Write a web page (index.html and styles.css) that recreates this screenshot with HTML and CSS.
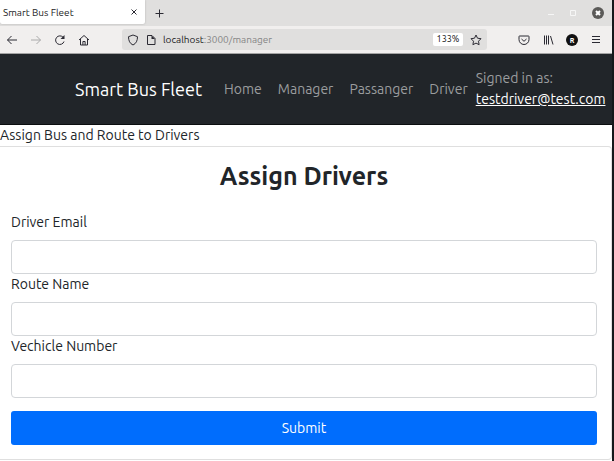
FILE: index.html
```html
<!DOCTYPE html>
<html lang="en">
<head>
<meta charset="utf-8">
<title>Smart Bus Fleet</title>
<link rel="stylesheet" href="styles.css">
</head>
<body>
<div class="window">
  <div class="tabstrip">
    <div class="tab">
      <span class="tab-title">Smart Bus Fleet</span>
      <button class="icon-button" aria-label="Close tab"><svg width="6" height="6" viewBox="0 0 6 6"><path d="M.5 .5l5 5M5.500 .5l-5 5"/></svg></button>
    </div>
    <button class="icon-button new-tab" aria-label="New tab"><svg width="9" height="9" viewBox="0 0 9 9"><path d="M4.500 .5v8M.5 4.500h8"/></svg></button>
    <div class="window-controls">
      <button class="icon-button faint" aria-label="Minimize"><svg width="6" height="6" viewBox="0 0 6 6"><path d="M0 4.500h6"/></svg></button>
      <button class="icon-button faint" aria-label="Maximize"><svg width="6" height="6" viewBox="0 0 6 6"><path d="M.5 .5h5v5h-5z"/></svg></button>
      <button class="icon-button" aria-label="Close window"><svg width="12" height="12" viewBox="0 0 12 12"><circle class="close-disc" cx="6" cy="6" r="6"/><path class="close-cross" d="M4 4l4 4M8 4l-4 4"/></svg></button>
    </div>
  </div>
  <div class="toolbar">
    <div class="history">
      <button class="icon-button" aria-label="Back"><svg width="12" height="12" viewBox="0 0 12 12"><path d="M11 6H1.500M5.500 2l-4 4 4 4"/></svg></button>
      <button class="icon-button disabled" aria-label="Forward"><svg width="12" height="12" viewBox="0 0 12 12"><path d="M1 6h9.500M6.500 2l4 4-4 4"/></svg></button>
      <button class="icon-button" aria-label="Reload"><svg width="12" height="12" viewBox="0 0 12 12"><path d="M10 7.500A4.300 4.300 0 1 1 9.200 3.400"/><path class="solid" d="M10.500 1v4h-4z"/></svg></button>
      <button class="icon-button" aria-label="Home"><svg width="12" height="12" viewBox="0 0 12 12"><path d="M1 6l5-4.500L11 6M2.500 5v6h7V5M4.900 11V7.500h2.200V11"/></svg></button>
    </div>
    <div class="address">
      <svg width="12" height="12" viewBox="0 0 12 12"><path d="M6 1l4.500 1.700c0 4-1.300 6.800-4.500 8.300C2.800 9.500 1.500 6.700 1.500 2.700z"/></svg>
      <svg width="10" height="12" viewBox="0 0 10 12"><path d="M1.500 1.500h4.500l3 3v6h-7.500z"/><path class="solid" d="M5.500 1.500v3.500h3.500z"/></svg>
      <span class="url"><b>localhost</b>:3000/manager</span>
      <button class="zoom-level">133%</button>
      <button class="icon-button" aria-label="Bookmark"><svg width="12" height="12" viewBox="0 0 12 12"><path d="M6 1l1.500 3.200 3.500.5-2.500 2.500.6 3.500L6 9.100l-3.100 1.600.6-3.500L1 4.700l3.500-.5z"/></svg></button>
    </div>
    <div class="tools">
      <button class="icon-button" aria-label="Pocket"><svg width="12" height="12" viewBox="0 0 12 12"><path d="M1.500 2h9q.5 0 .5.500v3a5 5 0 0 1-10 0v-3q0-.5.500-.5zM3.500 5l2.500 2.300L8.500 5"/></svg></button>
      <button class="icon-button" aria-label="Library"><svg width="12" height="12" viewBox="0 0 12 12"><path d="M2.500 1.500v9M4.500 1.500v9M6.500 1.500v9M8.500 2l2.500 8.500"/></svg></button>
      <button class="icon-button account" aria-label="Account">R</button>
      <button class="icon-button" aria-label="Menu"><svg width="12" height="12" viewBox="0 0 12 12"><path d="M2 2.500h8M2 5.500h8M2 8.500h8"/></svg></button>
    </div>
  </div>
  <nav class="navbar">
    <a class="brand" href="#">Smart Bus Fleet</a>
    <div class="nav-links">
      <a href="#">Home</a>
      <a href="#">Manager</a>
      <a href="#">Passanger</a>
      <a href="#">Driver</a>
    </div>
    <p class="signed-in">Signed in as: <a href="#">testdriver@test.com</a></p>
  </nav>
  <main>
    <p class="page-heading">Assign Bus and Route to Drivers</p>
    <section class="card">
      <h2>Assign Drivers</h2>
      <form>
        <label for="email">Driver Email</label>
        <input id="email" type="email">
        <label for="route">Route Name</label>
        <input id="route" type="text">
        <label for="vehicle">Vechicle Number</label>
        <input id="vehicle" type="text">
        <button class="submit" type="submit">Submit</button>
      </form>
    </section>
  </main>
</div>
</body>
</html>
```
FILE: styles.css
```css
* { box-sizing: border-box; }

body {
  margin: 0;
  background: #fff;
  color: #212529;
  font: 14px/21px Ubuntu, "Noto Sans", sans-serif;
}

.window {
  min-height: 100vh;
  border-right: 2px solid #15191b;
}

svg {
  display: block;
  flex: none;
  fill: none;
  stroke: #2b2a33;
  stroke-width: 1;
}

.solid { fill: #2b2a33; stroke: none; }

button, input { font: inherit; }

.icon-button {
  display: flex;
  align-items: center;
  justify-content: center;
  flex: none;
  padding: 0;
  border: 0;
  background: none;
}

.tabstrip {
  display: flex;
  align-items: center;
  height: 26px;
  background: #e0dfde;
}

.tab {
  display: flex;
  align-items: center;
  justify-content: space-between;
  width: 145px;
  height: 24px;
  margin-bottom: 2px;
  padding: 0 8px 0 3px;
  border-radius: 0 0 2px 2px;
  background: #fff;
  box-shadow: 0 0 2px #aaa;
  color: #222;
  font-size: 10px;
}

.new-tab { margin-left: 10px; }

.window-controls {
  display: flex;
  align-items: center;
  gap: 16px;
  margin-left: auto;
  padding-right: 8px;
}

.faint svg { stroke: #f6f6f6; }
.window-controls .close-disc { fill: #5b5a58; stroke: none; }
.window-controls .close-cross { stroke: #fff; stroke-width: 2; }

.toolbar {
  display: flex;
  align-items: center;
  height: 28px;
  border-bottom: 1px solid #a3a3a3;
  background: #f1efee;
}

.history, .tools {
  display: flex;
  gap: 12px;
  padding-left: 6px;
}

.tools { padding: 0 10px 0 31px; }
.disabled svg { stroke: #aaa; }

.address {
  display: flex;
  flex: 1;
  align-items: center;
  gap: 7px;
  height: 21px;
  margin-left: 32px;
  padding: 0 5px;
  border-radius: 3px;
  background: #e0dfde;
}

.url {
  flex: 1;
  color: #858585;
  font-size: 10px;
}

.url b { color: #222; font-weight: 400; }

.zoom-level {
  width: 30px;
  height: 13px;
  padding: 0;
  border: 0;
  border-radius: 2px;
  background: #fff;
  color: #111;
  font-size: 9px;
  line-height: 13px;
}

.account {
  width: 12px;
  height: 12px;
  border-radius: 50%;
  background: #111;
  color: #fff;
  font-size: 7px;
  font-weight: 700;
  line-height: 12px;
}

.navbar {
  display: flex;
  align-items: center;
  height: 71px;
  padding: 0 5px 0 75px;
  border-bottom: 1px solid #0b0e10;
  background: #212529;
  color: #9b9d9f;
}

.navbar a { color: #9b9d9f; text-decoration: none; white-space: nowrap; }

.navbar .brand {
  margin-right: 22px;
  color: #fff;
  font-size: 18px;
}

.nav-links { display: flex; gap: 16px; }

.signed-in { flex: 1; margin: 0 0 0 8px; }
.navbar .signed-in a { display: block; color: #fff; text-decoration: underline; }

.page-heading { margin: 0; }

.card {
  padding: 15px 14px 14px 11px;
  border: 1px solid #dfdfdf;
  border-left: 0;
  border-radius: 0 4px 4px 0;
}

h2 {
  margin: 0 0 22px;
  font-size: 25px;
  line-height: 28px;
  text-align: center;
}

form { display: flex; flex-direction: column; }

label { margin-bottom: 7px; }

input {
  height: 34px;
  padding: 5px 10px;
  border: 1px solid #d3d6d9;
  border-radius: 4px;
  background: #fff;
}

.submit {
  height: 34px;
  margin-top: 13px;
  border: 0;
  border-radius: 3px;
  background: #006dfd;
  color: #fff;
}
```
